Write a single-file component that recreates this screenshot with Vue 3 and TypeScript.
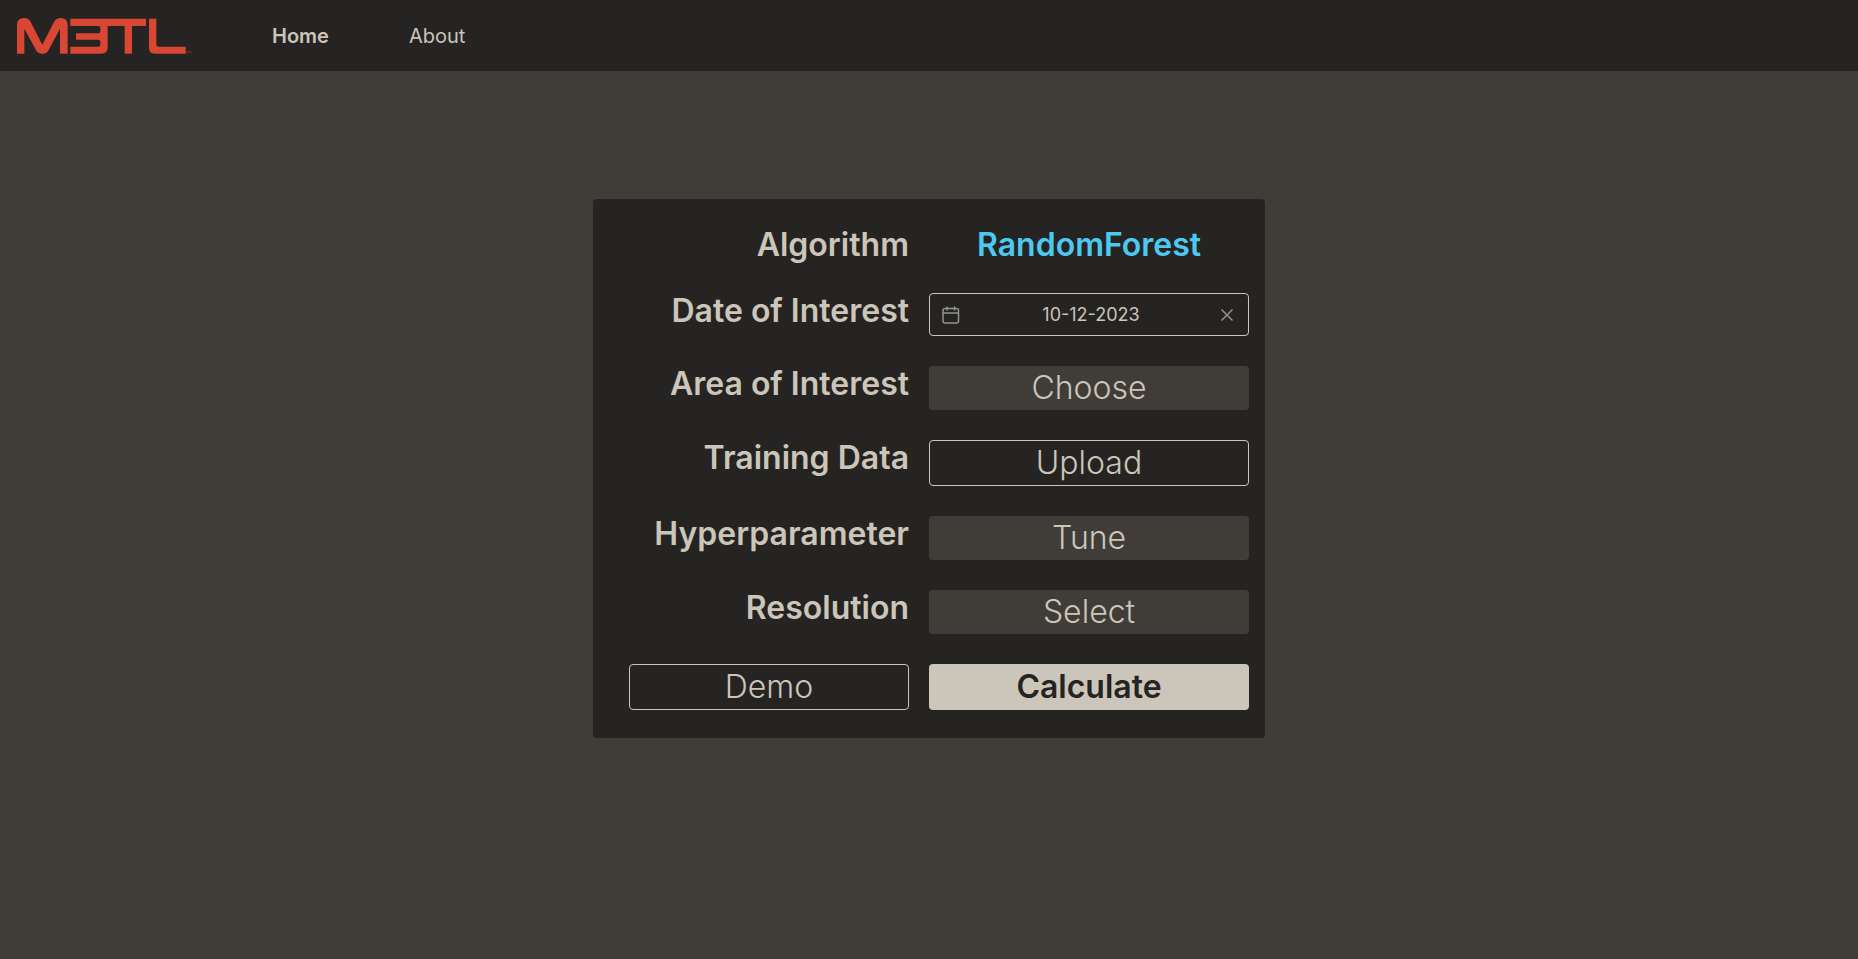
<script setup lang="ts">
import { ref } from 'vue'

interface Setting {
  id: string
  label: string
  action: string
  outlined: boolean
}

const date = ref('10-12-2023')

const settings: Setting[] = [
  { id: 'area', label: 'Area of Interest', action: 'Choose', outlined: false },
  { id: 'training', label: 'Training Data', action: 'Upload', outlined: true },
  { id: 'hyper', label: 'Hyperparameter', action: 'Tune', outlined: false },
  { id: 'resolution', label: 'Resolution', action: 'Select', outlined: false },
]
</script>

<template>
  <div class="page">
    <header class="header">
      <a href="#" class="brand" aria-label="M3TL">
        <svg class="logo" viewBox="51 52 525 108" aria-hidden="true">
          <path d="M51 159V73Q51 52 72 52Q86 52 92 64L127 132L162 64Q168 52 182 52Q203 52 203 73V159H180V84L144 152Q138 160 127 160Q116 160 110 152L73 84V159Z" />
          <path d="M211 54H438V76H396V159H374V76H323V140Q323 159 304 159H211V138H295Q301 138 301 132V123Q301 117 295 117H228V98H295Q301 98 301 92V82Q301 76 295 76H211Z" />
          <path d="M447 54H469V132Q469 138 475 138H557V159H464Q447 159 447 142Z" />
          <path class="mark" d="M559 152H564M561.500 152V158M567 158V152L569.500 155L572 152V158" />
        </svg>
      </a>
      <nav class="nav">
        <a href="#home" class="active" aria-current="page">Home</a>
        <a href="#about">About</a>
      </nav>
    </header>

    <main class="main">
      <form class="card" @submit.prevent>
        <span class="label">Algorithm</span>
        <strong class="algorithm">RandomForest</strong>

        <label class="label" for="date">Date of Interest</label>
        <div class="date-field">
          <svg class="icon" viewBox="0 0 18 18" aria-hidden="true">
            <rect x="1" y="2.500" width="15.500" height="14.500" rx="2" />
            <path d="M1 7H16.500M5 0.500V4.500M12.500 0.500V4.500" />
          </svg>
          <input id="date" v-model="date" type="text" />
          <button type="button" class="clear" aria-label="Clear date" @click="date = ''">
            <svg class="icon" viewBox="0 0 18 18" aria-hidden="true">
              <path d="M3.500 3.500L14.500 14.500M14.500 3.500L3.500 14.500" />
            </svg>
          </button>
        </div>

        <template v-for="item in settings" :key="item.id">
          <label class="label" :for="item.id">{{ item.label }}</label>
          <button :id="item.id" type="button" class="button" :class="{ outlined: item.outlined }">
            {{ item.action }}
          </button>
        </template>

        <button type="button" class="button outlined">Demo</button>
        <button type="submit" class="button primary">Calculate</button>
      </form>
    </main>
  </div>
</template>

<style>
body {
  margin: 0;
  background: #403d39;
}
</style>

<style scoped>
.page {
  min-height: 100vh;
  background: #403d39;
  color: #ccc5b9;
  font-family: Inter, "Open Sans", sans-serif;
}

.header {
  display: flex;
  align-items: center;
  gap: 80px;
  padding: 18px 17px 17px;
  background: #252422;
}

.brand,
.logo {
  display: block;
}

.logo {
  width: 175px;
  height: 36px;
  fill: #d94633;
}

.mark {
  fill: none;
  stroke: #8b382c;
  stroke-width: 2;
}

.nav {
  display: flex;
  gap: 80px;
  font-size: 20px;
  line-height: 24px;
}

.nav a {
  color: inherit;
  text-decoration: none;
}

.nav .active {
  font-weight: 600;
}

.main {
  display: flex;
  justify-content: center;
  padding: 128px 16px 32px;
}

.card {
  display: grid;
  grid-template-columns: minmax(0, 7fr) minmax(0, 8fr);
  gap: 30px 20px;
  box-sizing: border-box;
  width: 100%;
  max-width: 672px;
  padding: 28px 16px 28px 36px;
  border-radius: 4px;
  background: #252422;
  font-size: 32px;
  line-height: 36px;
}

.label {
  height: 36px;
  font-weight: 600;
  text-align: right;
  white-space: nowrap;
}

.algorithm {
  color: #4cc9f0;
  font-weight: 600;
  text-align: center;
}

.date-field {
  display: flex;
  align-items: center;
  padding: 0 12px;
  border: 1px solid #ccc5b9;
  border-radius: 4px;
}

.date-field input {
  flex: 1;
  min-width: 0;
  height: 41px;
  padding: 0 0 0 4px;
  border: 0;
  outline: 0;
  background: transparent;
  color: inherit;
  font: inherit;
  font-size: 18px;
  text-align: center;
}

.icon {
  display: block;
  flex: none;
  width: 18px;
  height: 18px;
  fill: none;
  stroke: #939290;
  stroke-width: 1.5;
}

.clear {
  padding: 0;
  border: 0;
  background: transparent;
  cursor: pointer;
}

.button {
  padding: 4px 16px;
  border: 0;
  border-radius: 4px;
  background: #403d39;
  color: inherit;
  font: inherit;
  font-weight: 300;
  cursor: pointer;
}

.button.outlined {
  border: 1px solid #ccc5b9;
  background: transparent;
}

.button.primary {
  background: #ccc5b9;
  color: #252422;
  font-weight: 600;
}
</style>
